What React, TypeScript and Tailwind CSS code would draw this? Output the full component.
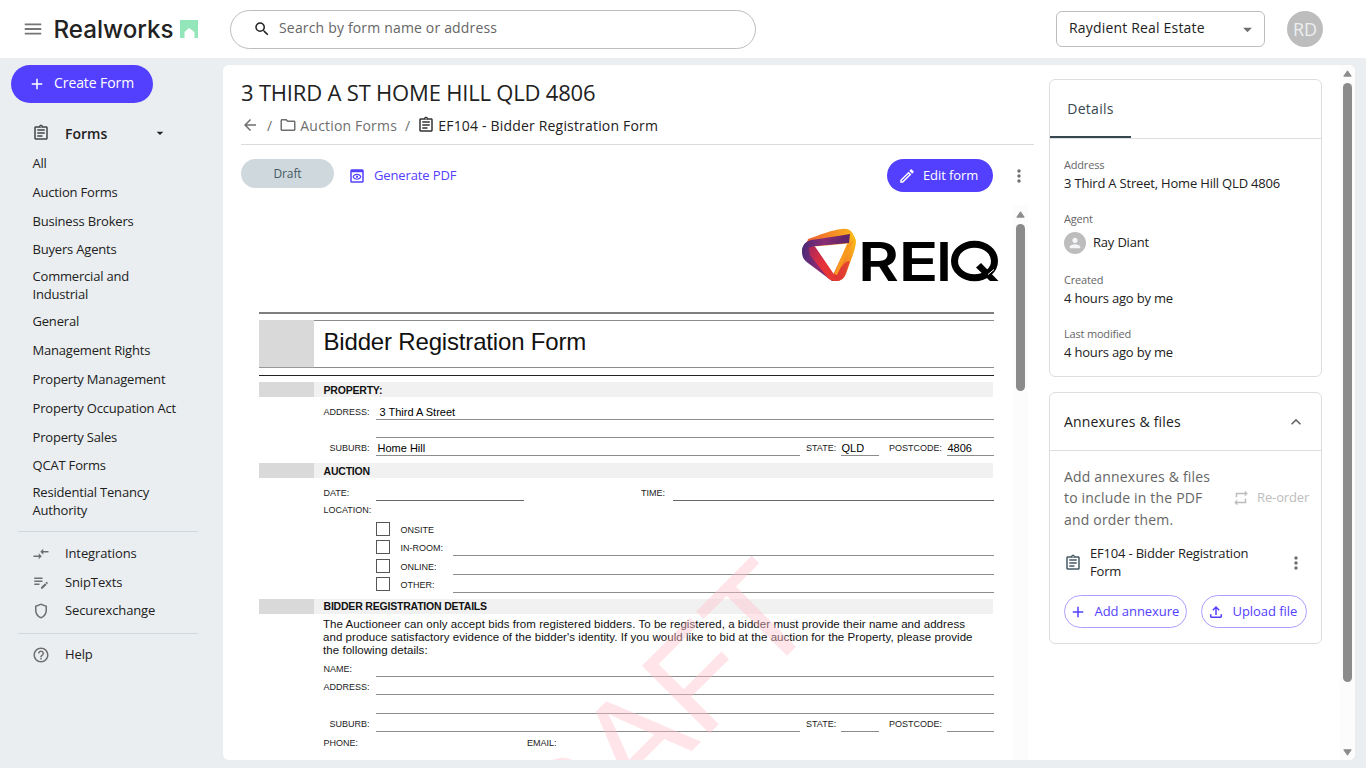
import React from "react";
import {
  MdAdd,
  MdArrowBack,
  MdArrowDropDown,
  MdExpandLess,
  MdHelpOutline,
  MdMenu,
  MdMoreVert,
  MdOutlineAssignment,
  MdOutlineCompareArrows,
  MdOutlineEdit,
  MdOutlineEditNote,
  MdOutlineFileUpload,
  MdOutlineFolder,
  MdOutlinePreview,
  MdOutlineShield,
  MdPerson,
  MdRepeat,
  MdSearch,
} from "react-icons/md";

const categories: { lines: string[] }[] = [
  { lines: ["All"] },
  { lines: ["Auction Forms"] },
  { lines: ["Business Brokers"] },
  { lines: ["Buyers Agents"] },
  { lines: ["Commercial and", "Industrial"] },
  { lines: ["General"] },
  { lines: ["Management Rights"] },
  { lines: ["Property Management"] },
  { lines: ["Property Occupation Act"] },
  { lines: ["Property Sales"] },
  { lines: ["QCAT Forms"] },
  { lines: ["Residential Tenancy", "Authority"] },
];

function RealworksLogo() {
  return (
    <svg width="146" height="30" viewBox="0 0 146 30" className="ml-[9px] shrink-0">
      <text x="0.5" y="23.500" fontFamily="Inter, sans-serif" fontWeight="500" fontSize="24.3" fill="#222" textLength="120" lengthAdjust="spacingAndGlyphs">
        Realworks
      </text>
      <path d="M127 6h18v18h-3.500v-6l-5.500-4-4.500 4v6h-4.500z" fill="#93e5ba" />
    </svg>
  );
}

function Header() {
  return (
    <header className="flex h-[58px] shrink-0 items-center bg-white">
      <MdMenu className="ml-[22px] size-[22px] shrink-0 text-[#757575]" />
      <RealworksLogo />
      <div className="ml-[31px] flex h-[39px] w-[526px] shrink-0 items-center rounded-full border border-[#bdbdbd] pl-[22px]">
        <MdSearch className="size-[18px] text-[#222]" />
        <span className="ml-2 pb-[3px] text-[14px] tracking-[0.170px] text-[#666]">Search by form name or address</span>
      </div>
      <div className="ml-[300px] flex h-9 w-[209px] shrink-0 items-center justify-between rounded-[6px] border border-[#bdbdbd] pr-[6px] pl-3">
        <span className="pb-[3px] text-[14px] tracking-[0.180px] text-[#222]">Raydient Real Estate</span>
        <MdArrowDropDown className="size-[21px] text-[#707070]" />
      </div>
      <div className="ml-[22px] flex size-9 shrink-0 items-center justify-center rounded-full bg-[#bdbdbd] text-[18px] text-[#eceff1]">RD</div>
    </header>
  );
}

function SideLink({ icon, label }: { icon: React.ReactNode; label: string }) {
  return (
    <div className="flex h-[28.700px] items-center pl-8 text-[13px] tracking-[-0.120px]">
      <span className="flex w-[33px] text-[#6f6f6f]">{icon}</span>
      <span>{label}</span>
    </div>
  );
}

function Sidebar() {
  return (
    <aside className="flex w-[223px] shrink-0 flex-col text-[#212121]">
      <button className="mt-[7px] ml-[11px] flex h-[38px] w-[142px] items-center rounded-full bg-[#5340ff] pl-[17px] text-[14px] font-medium tracking-[-0.080px] text-white">
        <MdAdd className="size-[18px]" />
        <span className="ml-2 pb-[3px]">Create Form</span>
      </button>
      <div className="mt-[16px] flex h-[28px] items-center pl-8">
        <MdOutlineAssignment className="size-[18px] text-[#444]" />
        <span className="ml-[15px] text-[14px] font-semibold">Forms</span>
        <MdArrowDropDown className="ml-[45px] size-[16px]" />
      </div>
      <ul className="mt-[1.600px] text-[13px] leading-[18px] tracking-[-0.190px]">
        {categories.map((c) => (
          <li
            key={c.lines[0]}
            className={c.lines.length > 1 ? "flex h-[43.200px] flex-col justify-center pl-[32.500px]" : "flex h-[28.800px] flex-col justify-center pl-[32.500px]"}
          >
            {c.lines.map((l) => (
              <span key={l}>{l}</span>
            ))}
          </li>
        ))}
      </ul>
      <div className="mt-[8.400px] ml-[18px] w-[180px] border-t border-[#cfd8dc]" />
      <div className="mt-[7px]">
        <SideLink icon={<MdOutlineCompareArrows className="size-[18px]" />} label="Integrations" />
        <SideLink icon={<MdOutlineEditNote className="size-[18px]" />} label="SnipTexts" />
        <SideLink icon={<MdOutlineShield className="size-[18px]" />} label="Securexchange" />
      </div>
      <div className="mt-[8px] mb-[6px] ml-[18px] w-[180px] border-t border-[#cfd8dc]" />
      <SideLink icon={<MdHelpOutline className="size-[18px]" />} label="Help" />
    </aside>
  );
}

function ScrollArrow({ down = false }: { down?: boolean }) {
  return (
    <svg width="9" height="7" viewBox="0 0 9 7" className={down ? "rotate-180" : ""}>
      <path d="M4.500 0.800L8.200 6.200H0.800z" fill="#8b8b8b" stroke="#8b8b8b" strokeWidth="1" strokeLinejoin="round" />
    </svg>
  );
}

function ReiqLogo() {
  return (
    <svg width="200" height="76" viewBox="0 0 200 76">
      <defs>
        <linearGradient id="purple" x1="0" x2="1">
          <stop offset="0" stopColor="#4a2a78" />
          <stop offset="0.45" stopColor="#8a2c73" />
          <stop offset="1" stopColor="#5b2466" />
        </linearGradient>
        <linearGradient id="red" x1="0" y1="0" x2="1" y2="1">
          <stop offset="0" stopColor="#a3265f" />
          <stop offset="0.5" stopColor="#e5313a" />
          <stop offset="1" stopColor="#e83c2e" />
        </linearGradient>
        <linearGradient id="orange" x1="1" y1="0" x2="0" y2="1">
          <stop offset="0" stopColor="#fbc516" />
          <stop offset="0.5" stopColor="#f58a24" />
          <stop offset="1" stopColor="#dd3036" />
        </linearGradient>
        <linearGradient id="amber" x1="0" x2="1">
          <stop offset="0" stopColor="#ed5b34" />
          <stop offset="1" stopColor="#fbb818" />
        </linearGradient>
      </defs>
      <path d="M8 11C20 7 31 2 42 1q8-1 11 5l3 7-8 7-42-2z" fill="url(#amber)" />
      <path d="M2 24q0-9 8-10l22 34 5 5-5 0Q20 44 8 35 2 31 2 24z" fill="url(#purple)" />
      <path d="M8 16l8 3 20 30 4 3q-8 3-13-3L10 27z" fill="url(#red)" />
      <path d="M50 5q6 3 6 10-1 7-5 17l-5 14q-3 7-9 7l-4-6z" fill="url(#orange)" />
      <path d="M50 33l-5 14q-3 6-9 6l-3-5 13-14z" fill="#dd3036" opacity=".75" />
      <path d="M2 24q0-10 9-12 14-2 39-6l-1 9-33 3Q6 19 2 24z" fill="url(#purple)" />
      <path d="M15 18.500l33-3-14.500 30z" fill="#fff" />
      <path d="M47 16l7-4-17 35-3-1z" fill="#f99a20" />
      <g fontFamily="Inter, sans-serif" fontWeight="600" fontSize="54" fill="#000">
        <text x="58" y="52.700" textLength="41" lengthAdjust="spacingAndGlyphs">R</text>
        <text x="98.500" y="52.700" textLength="40" lengthAdjust="spacingAndGlyphs">E</text>
        <text x="136" y="52.700" textLength="16" lengthAdjust="spacingAndGlyphs">I</text>
      </g>
      <ellipse cx="174.500" cy="33" rx="20" ry="16.800" fill="none" stroke="#000" strokeWidth="7" />
      <path d="M176 39.500l5-4.500L198.500 53h-8.500z" fill="#000" />
      <path d="M188 46.500l6-5" stroke="#fff" strokeWidth="1" />
    </svg>
  );
}

function Band({ title }: { title: string }) {
  return (
    <div className="flex h-[15px] shrink-0 items-center">
      <div className="h-full w-[55px] bg-[#d9d9d9]" />
      <div className="flex h-full w-[679px] items-center bg-[#f1f1f1] pl-[9.500px] text-[10.500px] font-bold tracking-[-0.200px] text-[#111]">{title}</div>
    </div>
  );
}

const rule = "border-b border-[#8c8c8c]";

function Label({ children, className = "" }: { children: React.ReactNode; className?: string }) {
  return <span className={`shrink-0 text-[9px] leading-[11px] whitespace-pre text-[#222] ${className}`}>{children}</span>;
}

function AddressRow({ value }: { value?: string }) {
  return (
    <div className="flex h-full items-end">
      <Label className="w-[52px] pb-[2px]">ADDRESS:</Label>
      <div className={`flex h-full flex-1 items-end pl-[4px] ${rule}`}>{value}</div>
    </div>
  );
}

function SuburbRow({ suburb, state, postcode }: { suburb?: string; state?: string; postcode?: string }) {
  return (
    <div className="flex h-full items-end">
      <Label className="w-[52px] pb-[2px] pl-[6px]">SUBURB:</Label>
      <div className={`flex h-full w-[424px] items-end pl-[2px] ${rule}`}>{suburb}</div>
      <Label className="w-[41px] pb-[2px] pl-[6.500px]">STATE:</Label>
      <div className={`flex h-full w-[38px] items-end pl-px ${rule}`}>{state}</div>
      <Label className="w-[68px] pb-[2px] pl-[10.500px]">POSTCODE:</Label>
      <div className={`flex h-full flex-1 items-end pl-px ${rule}`}>{postcode}</div>
    </div>
  );
}

function LocationOption({ label, line = true }: { label: string; line?: boolean }) {
  return (
    <div className="flex h-[18.200px] shrink-0 items-end pl-[52px]">
      <div className="mb-[2px] size-[14px] border border-[#555]" />
      <Label className="w-[63px] pb-[2px] pl-[10.500px]">{label}</Label>
      {line && <div className={`h-full flex-1 ${rule}`} />}
    </div>
  );
}

function FormDocument() {
  return (
    <div className="relative flex h-[555px] w-[772px] flex-col overflow-hidden pl-[18px] font-['Liberation_Sans',Arial,sans-serif] text-[11px] leading-[14px] text-black">
      <div className="flex h-[107px] w-[741px] shrink-0 justify-end pt-[23px]">
        <ReiqLogo />
      </div>
      <div className="flex w-[735px] shrink-0 flex-col">
        <div className="h-[2px] bg-[#7f7f7f]" />
        <div className="mt-[6px] flex h-[48px]">
          <div className="w-[55px] border-b border-[#999] bg-[#d9d9d9]" />
          <div className="flex flex-1 items-center border-y border-[#8c8c8c] pb-[5px] pl-[9.500px] text-[24px] leading-none tracking-[-0.170px] text-[#111]">Bidder Registration Form</div>
        </div>
        <div className="mt-[7px] mb-[6px] h-px bg-[#222]" />
        <Band title="PROPERTY:" />
        <div className="h-[23px] pl-[64.500px]"><AddressRow value="3 Third A Street" /></div>
        <div className={`ml-[116.500px] h-[18px] ${rule}`} />
        <div className="h-[18px] pl-[64.500px]"><SuburbRow suburb="Home Hill" state="QLD" postcode="4806" /></div>
        <div className="h-[7px]" />
        <Band title="AUCTION" />
        <div className="flex h-[22.500px] items-end pl-[64.500px]">
          <Label className="w-[52px] pb-[2px]">DATE:</Label>
          <div className="h-full w-[148px] border-b border-[#666]" />
          <Label className="ml-[117.500px] w-[32px] pb-[2px]">TIME:</Label>
          <div className="h-full flex-1 border-b border-[#666]" />
        </div>
        <div className="flex h-[19.500px] items-center pl-[64.500px] pt-px"><Label>LOCATION:</Label></div>
        <div className="flex flex-col pl-[65px]">
          <LocationOption label="ONSITE" line={false} />
          <LocationOption label="IN-ROOM:" />
          <LocationOption label="ONLINE:" />
          <LocationOption label="OTHER:" />
        </div>
        <div className="h-[6.200px]" />
        <Band title="BIDDER REGISTRATION DETAILS" />
        <p className="mt-[4px] h-[37.800px] pl-[64px] text-[11.500px] leading-[12.800px] tracking-[0.050px] whitespace-nowrap text-[#111]">
          The Auctioneer can only accept bids from registered bidders. To be registered, a bidder must provide their name and address
          <br />
          and produce satisfactory evidence of the bidder's identity. If you would like to bid at the auction for the Property, please provide
          <br />
          the following details:
        </p>
        <div className="flex h-[21px] items-end pl-[64.500px]">
          <Label className="w-[52px] pb-[2px]">NAME:</Label>
          <div className={`h-full flex-1 ${rule}`} />
        </div>
        <div className="h-[18px] pl-[64.500px]"><AddressRow /></div>
        <div className={`ml-[116.500px] h-[19px] ${rule}`} />
        <div className="h-[18px] pl-[64.500px]"><SuburbRow /></div>
        <div className="flex h-[23px] items-center pl-[64.500px]">
          <Label className="w-[203.500px]">PHONE:</Label>
          <Label>EMAIL:</Label>
        </div>
      </div>
      <svg className="pointer-events-none absolute top-0 left-0" width="772" height="555" viewBox="241 205 772 555">
        <text transform="translate(493.900 948.900) rotate(-45)" fontFamily="'Liberation Sans', Arial, sans-serif" fontSize="139" fill="#ffc0cb" fillOpacity="0.42">
          DRAFT
        </text>
      </svg>
    </div>
  );
}

function FormPanel() {
  return (
    <section className="flex w-[793px] shrink-0 flex-col">
      <h1 className="mt-[11px] h-[32px] text-[22px] leading-[32px] tracking-[-0.190px] whitespace-nowrap text-[#212121]">3 THIRD A ST HOME HILL QLD 4806</h1>
      <nav className="mt-[6px] flex h-[22px] items-center text-[14px] tracking-[0.180px] whitespace-nowrap text-[#6f6f6f]">
        <MdArrowBack className="size-[18px]" />
        <span className="ml-[8px]">/</span>
        <MdOutlineFolder className="ml-[7px] size-[18px]" />
        <span className="ml-[3px]">Auction Forms</span>
        <span className="ml-[8px]">/</span>
        <MdOutlineAssignment className="ml-[7px] size-[18px] text-[#333]" />
        <span className="ml-[3px] text-[#212121]">EF104 - Bidder Registration Form</span>
      </nav>
      <div className="mt-[8px] border-t border-[#dcdcdc]" />
      <div className="mt-[14px] flex h-[33px] shrink-0 items-start">
        <span className="flex h-[29px] w-[93px] items-center justify-center rounded-full bg-[#cfd8dc] text-[12px] tracking-[-0.100px] text-[#455a64]">Draft</span>
        <span className="ml-[14px] flex h-[33px] items-center text-[13px] font-medium text-[#5340ff]">
          <MdOutlinePreview className="size-[18px]" />
          <span className="ml-[8px] tracking-[-0.120px]">Generate PDF</span>
        </span>
        <button className="ml-auto flex h-[33px] w-[106px] items-center rounded-full bg-[#5340ff] pl-[11px] text-[13px] font-medium tracking-[-0.100px] text-white">
          <MdOutlineEdit className="size-[18px]" />
          <span className="ml-[7px]">Edit form</span>
        </button>
        <MdMoreVert className="mt-[7px] mr-[5.500px] ml-[15.500px] size-5 text-[#6f6f6f]" />
      </div>
      <div className="mt-[13px] flex h-[555px] shrink-0">
        <FormDocument />
        <div className="flex w-[15px] flex-col items-center bg-[#fcfcfc] pt-[6px]">
          <ScrollArrow />
          <div className="mt-[6px] h-[167px] w-[9px] shrink-0 rounded-full bg-[#8b8b8b]" />
        </div>
      </div>
    </section>
  );
}

function Detail({ label, children }: { label: string; children: React.ReactNode }) {
  return (
    <div>
      <div className="h-[18px] text-[11px] leading-[18px] text-[#666]">{label}</div>
      {children}
    </div>
  );
}

function DetailsCard() {
  return (
    <div className="h-[298px] shrink-0 rounded-[6px] border border-[#dedede]">
      <div className="flex h-[59px] border-b border-[#dedede]">
        <div className="flex w-[81px] items-center justify-center border-b-2 border-[#37474f] text-[14px] tracking-[0.300px] text-[#37474f]">Details</div>
      </div>
      <div className="px-[14px] pt-[17px] text-[13px] leading-[18px] tracking-[-0.190px] text-[#212121]">
        <Detail label="Address">3 Third A Street, Home Hill QLD 4806</Detail>
        <div className="mt-[18px]">
          <Detail label="Agent">
            <div className="mt-[4px] flex h-[22px] items-center">
              <span className="flex size-[22px] items-center justify-center rounded-full bg-[#bdbdbd]">
                <MdPerson className="size-[16px] text-[#f3f5f6]" />
              </span>
              <span className="ml-[7px] pb-[2px]">Ray Diant</span>
            </div>
          </Detail>
        </div>
        <div className="mt-[17px]">
          <Detail label="Created">4 hours ago by me</Detail>
        </div>
        <div className="mt-[18px]">
          <Detail label="Last modified">4 hours ago by me</Detail>
        </div>
      </div>
    </div>
  );
}

function AnnexuresCard() {
  return (
    <div className="mt-[15px] h-[252px] shrink-0 rounded-[6px] border border-[#dedede] text-[#212121]">
      <div className="flex h-[58px] items-center justify-between border-b border-[#dedede] pr-[15px] pl-[14px] text-[14px] tracking-[0.180px]">
        <span>Annexures &amp; files</span>
        <MdExpandLess className="size-[20px] text-[#666]" />
      </div>
      <div className="mt-[15px] flex h-[64px] items-center pl-[14px]">
        <div className="w-[168px] text-[14px] leading-[21.400px] tracking-[0.180px] whitespace-nowrap text-[#666]">
          Add annexures &amp; files
          <br />
          to include in the PDF
          <br />
          and order them.
        </div>
        <MdRepeat className="size-[18px] text-[#bdbdbd]" />
        <span className="ml-[7px] text-[13px] tracking-[-0.120px] whitespace-nowrap text-[#bdbdbd]">Re-order</span>
      </div>
      <div className="mt-[14px] flex h-[36px] items-center pl-[14px] text-[13px] leading-[18px] tracking-[-0.190px]">
        <MdOutlineAssignment className="mt-[2px] size-[18px] text-[#455a64]" />
        <div className="ml-[8px] w-[196px] whitespace-nowrap">
          EF104 - Bidder Registration
          <br />
          Form
        </div>
        <MdMoreVert className="mt-[2px] size-5 text-[#6f6f6f]" />
      </div>
      <div className="mt-[15px] flex h-[33px] gap-[14px] pl-[14px] text-[13px] font-medium tracking-[-0.050px] whitespace-nowrap text-[#5340ff]">
        <button className="flex h-[33px] w-[123px] items-center rounded-full border border-[#a99fff] pl-[4px]">
          <MdAdd className="size-[18px]" />
          <span className="ml-[7.500px]">Add annexure</span>
        </button>
        <button className="flex h-[33px] w-[106px] items-center rounded-full border border-[#a99fff] pl-[5px]">
          <MdOutlineFileUpload className="size-[18px]" />
          <span className="ml-[7.500px]">Upload file</span>
        </button>
      </div>
    </div>
  );
}

export default function App() {
  return (
    <div className="flex h-[768px] w-[1366px] flex-col overflow-hidden bg-[#eaeef1] font-['Open_Sans','Noto_Sans',sans-serif]">
      <Header />
      <div className="flex h-[710px]">
        <Sidebar />
        <main className="mt-[7px] flex h-[695px] w-[1132px] overflow-hidden rounded-[6px] bg-white pl-[18px]">
          <FormPanel />
          <div className="ml-[15px] flex w-[273px] shrink-0 flex-col pt-[14px]">
            <DetailsCard />
            <AnnexuresCard />
          </div>
          <div className="ml-auto flex w-[15px] flex-col items-center bg-[#fcfcfc] pt-[5px] pb-[4px]">
            <ScrollArrow />
            <div className="mt-[6px] h-[599px] w-[9px] rounded-full bg-[#8b8b8b]" />
            <div className="mt-auto flex">
              <ScrollArrow down />
            </div>
          </div>
        </main>
      </div>
    </div>
  );
}
